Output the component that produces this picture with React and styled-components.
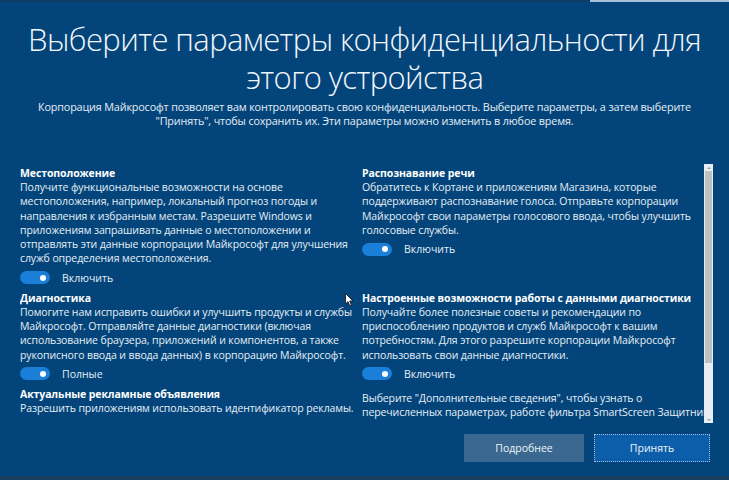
import React from "react";
import styled, { createGlobalStyle } from "styled-components";

const Global = createGlobalStyle`
  html, body { margin: 0; padding: 0; background: #03457a; overflow: hidden; }
  * { box-sizing: border-box; }
`;

const Page = styled.div`
  position: relative;
  width: 729px;
  height: 480px;
  display: flex;
  flex-direction: column;
  background: #03457a;
  color: #e8eff6;
  font-family: "Open Sans", "Noto Sans", sans-serif;
  overflow: hidden;
`;

const TopStrip = styled.div`
  height: 2px;
  flex: none;
  background: linear-gradient(to right, #0d3c66 0, #0d3c66 590px, #a9c0d4 590px, #a9c0d4 100%);
`;

const Header = styled.header`
  display: flex;
  flex-direction: column;
  align-items: center;
  padding-top: 18px;
`;

const Title = styled.h1`
  margin: 0;
  font-weight: 300;
  font-size: 31px;
  line-height: 38px;
  letter-spacing: -0.6px;
  color: #f2f6fa;
  text-align: center;
  white-space: nowrap;
`;

const Subtitle = styled.p`
  margin: 4px 0 0;
  font-size: 10.8px;
  line-height: 14px;
  letter-spacing: -0.15px;
  color: #e6eef6;
  text-align: center;
  white-space: nowrap;
`;

const ScrollArea = styled.div`
  margin-top: 33px;
  height: 262px;
  display: flex;
  flex: none;
  padding-left: 20px;
  padding-right: 16px;
`;

const Viewport = styled.div`
  flex: 1;
  overflow: hidden;
  padding-top: 5px;
`;

const Grid = styled.div`
  display: grid;
  grid-template-columns: 342px 1fr;
  align-items: start;
`;

const Section = styled.section`
  margin-bottom: 5px;
`;

const SectionTitle = styled.h2`
  margin: 0;
  font-size: 10.5px;
  line-height: 14px;
  font-weight: 700;
  color: #ffffff;
  white-space: nowrap;
  letter-spacing: -0.1px;
`;

const Body = styled.p`
  margin: ${(p) => (p.$top ? p.$top : 0)} 0 0;
  font-size: 10.5px;
  line-height: 14.3px;
  color: #e6eef6;
  white-space: nowrap;
  letter-spacing: -0.1px;
`;

const ToggleRow = styled.div`
  margin-top: 4px;
  height: 16px;
  display: flex;
  align-items: center;
  gap: 12px;
  font-size: 10.5px;
  color: #e6eef6;
`;

const Switch = styled.span`
  position: relative;
  width: 30px;
  height: 13px;
  border-radius: 7px;
  background: #1a7fd9;
  flex: none;
  &::after {
    content: "";
    position: absolute;
    right: 4px;
    top: 3.5px;
    width: 6px;
    height: 6px;
    border-radius: 50%;
    background: #ffffff;
  }
`;

const Scrollbar = styled.div`
  width: 9px;
  margin-top: 3px;
  height: 259px;
  flex: none;
  background: #e7edf2;
  display: flex;
  flex-direction: column;
  align-items: center;
`;

const Arrow = styled.div`
  height: 7px;
  width: 9px;
  display: flex;
  align-items: center;
  justify-content: center;
  flex: none;
  &::before {
    content: "";
    border-left: 2px solid transparent;
    border-right: 2px solid transparent;
    ${(p) => (p.$down ? "border-top: 2px solid #9aa3ab;" : "border-bottom: 2px solid #9aa3ab;")}
  }
`;

const Thumb = styled.div`
  width: 7px;
  height: 192px;
  background: #bcc1c6;
  flex: none;
`;

const Spacer = styled.div`
  flex: 1;
`;

const Footer = styled.footer`
  display: flex;
  justify-content: flex-end;
  gap: 10px;
  padding: 11px 19px 0 0;
`;

const Button = styled.button`
  width: ${(p) => p.$w}px;
  height: 28px;
  font-family: "Open Sans", "Noto Sans", sans-serif;
  font-size: 10.5px;
  color: #eef4f9;
  border: 1px ${(p) => (p.$primary ? "dotted #9fbcd8" : "solid transparent")};
  background: ${(p) => (p.$primary ? "#0c5eab" : "#3a6890")};
  padding: 0;
`;

const BottomBand = styled.div`
  margin-top: auto;
  height: 4px;
  background: #173d5f;
`;

const Cursor = styled.svg`
  position: absolute;
  left: 345px;
  top: 293px;
`;

const Lines = ({ lines }) =>
  lines.map((l, i) => (
    <React.Fragment key={i}>
      {l}
      {i < lines.length - 1 && <br />}
    </React.Fragment>
  ));

const Item = ({ title, lines, toggle }) => (
  <Section>
    <SectionTitle>{title}</SectionTitle>
    <Body>
      <Lines lines={lines} />
    </Body>
    {toggle && (
      <ToggleRow>
        <Switch />
        {toggle}
      </ToggleRow>
    )}
  </Section>
);

export default function App() {
  return (
    <Page>
      <Global />
      <TopStrip />
      <Header>
        <Title>
          Выберите параметры конфиденциальности для
          <br />
          этого устройства
        </Title>
        <Subtitle>
          Корпорация Майкрософт позволяет вам контролировать свою конфиденциальность. Выберите параметры, а затем выберите
          <br />
          "Принять", чтобы сохранить их. Эти параметры можно изменить в любое время.
        </Subtitle>
      </Header>
      <ScrollArea>
        <Viewport>
          <Grid>
            <Item
              title="Местоположение"
              lines={[
                "Получите функциональные возможности на основе",
                "местоположения, например, локальный прогноз погоды и",
                "направления к избранным местам. Разрешите Windows и",
                "приложениям запрашивать данные о местоположении и",
                "отправлять эти данные корпорации Майкрософт для улучшения",
                "служб определения местоположения.",
              ]}
              toggle="Включить"
            />
            <Item
              title="Распознавание речи"
              lines={[
                "Обратитесь к Кортане и приложениям Магазина, которые",
                "поддерживают распознавание голоса. Отправьте корпорации",
                "Майкрософт свои параметры голосового ввода, чтобы улучшить",
                "голосовые службы.",
              ]}
              toggle="Включить"
            />
            <Item
              title="Диагностика"
              lines={[
                "Помогите нам исправить ошибки и улучшить продукты и службы",
                "Майкрософт. Отправляйте данные диагностики (включая",
                "использование браузера, приложений и компонентов, а также",
                "рукописного ввода и ввода данных) в корпорацию Майкрософт.",
              ]}
              toggle="Полные"
            />
            <Item
              title="Настроенные возможности работы с данными диагностики"
              lines={[
                "Получайте более полезные советы и рекомендации по",
                "приспособлению продуктов и служб Майкрософт к вашим",
                "потребностям. Для этого разрешите корпорации Майкрософт",
                "использовать свои данные диагностики.",
              ]}
              toggle="Включить"
            />
            <Item
              title="Актуальные рекламные объявления"
              lines={["Разрешить приложениям использовать идентификатор рекламы."]}
            />
            <Body $top="4px">
              Выберите "Дополнительные сведения", чтобы узнать о
              <br />
              перечисленных параметрах, работе фильтра SmartScreen Защитника
            </Body>
          </Grid>
        </Viewport>
        <Scrollbar>
          <Arrow />
          <Thumb />
          <Spacer />
          <Arrow $down />
        </Scrollbar>
      </ScrollArea>
      <Footer>
        <Button $w={120}>Подробнее</Button>
        <Button $w={116} $primary>
          Принять
        </Button>
      </Footer>
      <BottomBand />
      <Cursor width="9" height="14" viewBox="0 0 9 14">
        <path d="M0.5 0.5 L0.5 11 L3 8.6 L4.8 12.8 L6.4 12.1 L4.7 8 L8 8 Z" fill="#ffffff" stroke="#111" strokeWidth="0.8" />
      </Cursor>
    </Page>
  );
}
